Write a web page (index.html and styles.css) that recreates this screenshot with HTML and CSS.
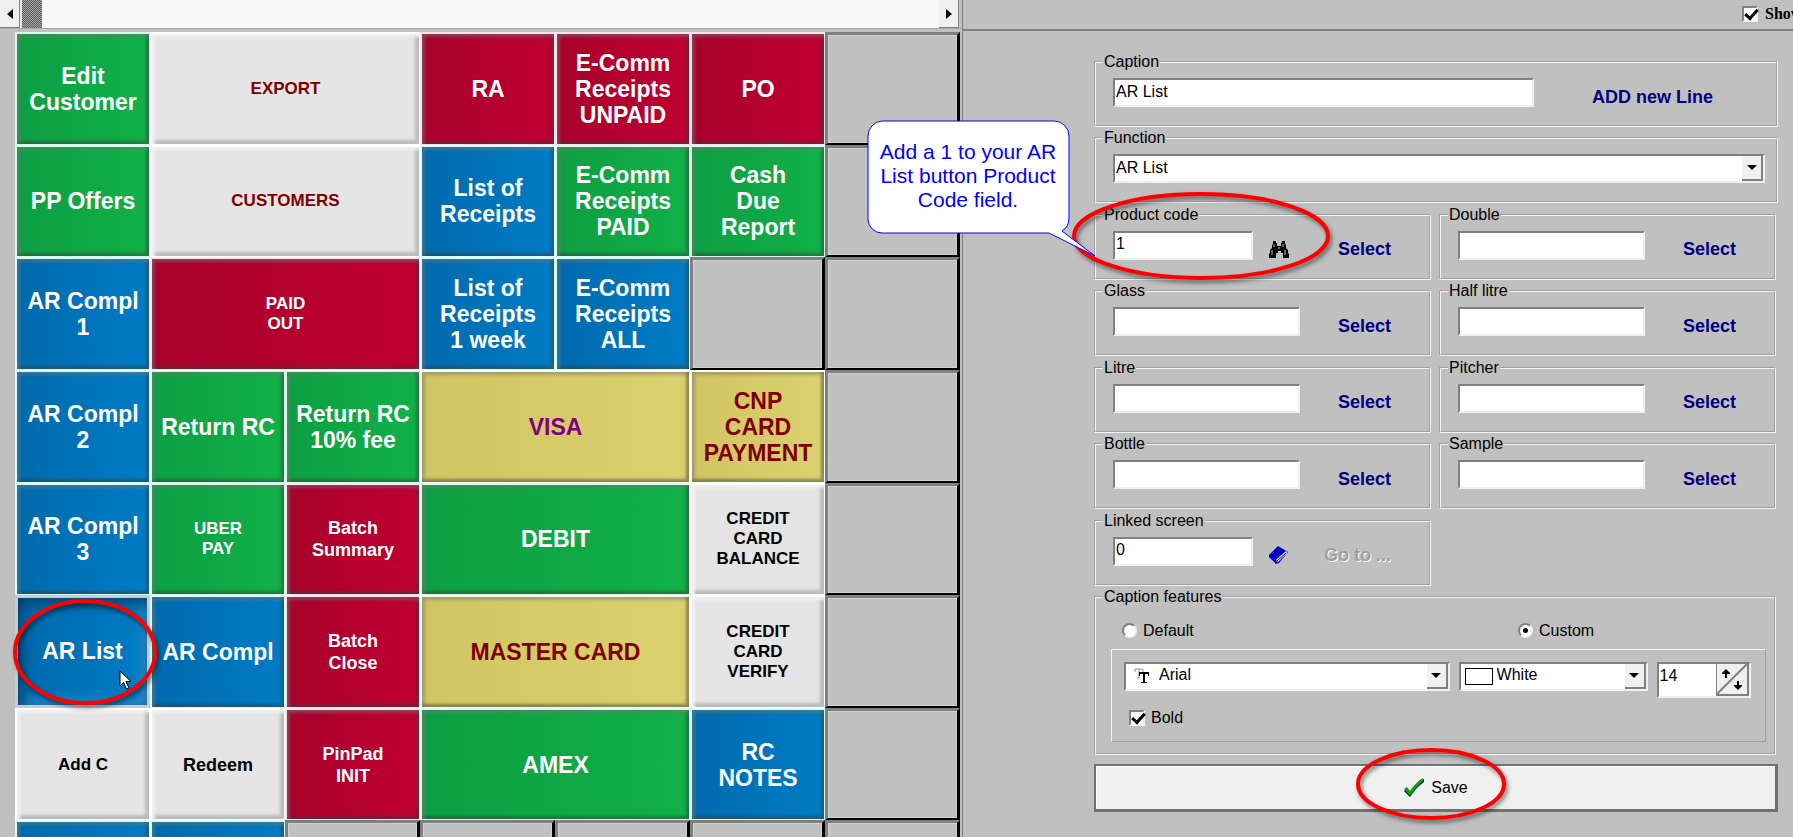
FILE: index.html
```html
<!DOCTYPE html>
<html lang="en">
<head>
<meta charset="utf-8">
<title>Screen editor</title>
<link rel="stylesheet" href="styles.css">
</head>
<body>
<main class="app">
  <section class="board" aria-label="Button layout">
    <div class="scrollbar">
      <button class="scroll-btn" aria-label="Scroll left"><svg width="6" height="10" viewBox="0 0 6 10"><path d="M6 0v10L0 5z"/></svg></button>
      <div class="scroll-thumb"></div>
      <div class="scroll-track"></div>
      <button class="scroll-btn" aria-label="Scroll right"><svg width="6" height="10" viewBox="0 0 6 10"><path d="M0 0v10l6-5z"/></svg></button>
    </div>
    <div class="tiles">
      <button class="tile green">Edit<br>Customer</button>
      <button class="tile gray wide small maroon">EXPORT</button>
      <button class="tile red">RA</button>
      <button class="tile red">E-Comm<br>Receipts<br>UNPAID</button>
      <button class="tile red">PO</button>
      <button class="tile empty" aria-label="Empty"></button>

      <button class="tile green">PP Offers</button>
      <button class="tile gray wide small maroon">CUSTOMERS</button>
      <button class="tile blue">List of<br>Receipts</button>
      <button class="tile green">E-Comm<br>Receipts<br>PAID</button>
      <button class="tile green">Cash<br>Due<br>Report</button>
      <button class="tile empty" aria-label="Empty"></button>

      <button class="tile blue">AR Compl<br>1</button>
      <button class="tile red wide small">PAID<br>OUT</button>
      <button class="tile blue">List of<br>Receipts<br>1 week</button>
      <button class="tile blue">E-Comm<br>Receipts<br>ALL</button>
      <button class="tile empty" aria-label="Empty"></button>
      <button class="tile empty" aria-label="Empty"></button>

      <button class="tile blue">AR Compl<br>2</button>
      <button class="tile green">Return RC</button>
      <button class="tile green">Return RC<br>10% fee</button>
      <button class="tile yellow wide purple">VISA</button>
      <button class="tile yellow maroon">CNP<br>CARD<br>PAYMENT</button>
      <button class="tile empty" aria-label="Empty"></button>

      <button class="tile blue">AR Compl<br>3</button>
      <button class="tile green small">UBER<br>PAY</button>
      <button class="tile red medium">Batch<br>Summary</button>
      <button class="tile green wide">DEBIT</button>
      <button class="tile gray small">CREDIT<br>CARD<br>BALANCE</button>
      <button class="tile empty" aria-label="Empty"></button>

      <div class="cell">
        <button class="tile blue pressed">AR List</button>
        <svg class="ring ring-tile" viewBox="0 0 144 106" preserveAspectRatio="none"><ellipse cx="72" cy="53" rx="70" ry="51"/></svg>
        <svg class="cursor" width="13" height="20" viewBox="0 0 13 20"><path d="M1 1v15l3.500-3.500 3 6.500 2.500-1-3-6.500h5z" fill="#fff" stroke="#000"/></svg>
      </div>
      <button class="tile blue">AR Compl</button>
      <button class="tile red medium">Batch<br>Close</button>
      <button class="tile yellow wide maroon">MASTER CARD</button>
      <button class="tile gray small">CREDIT<br>CARD<br>VERIFY</button>
      <button class="tile empty" aria-label="Empty"></button>

      <button class="tile gray small">Add C</button>
      <button class="tile gray medium">Redeem</button>
      <button class="tile red medium">PinPad<br>INIT</button>
      <button class="tile green wide">AMEX</button>
      <button class="tile blue">RC<br>NOTES</button>
      <button class="tile empty" aria-label="Empty"></button>

      <button class="tile blue" aria-label="Blue button"></button>
      <button class="tile blue" aria-label="Blue button"></button>
      <button class="tile empty" aria-label="Empty"></button>
      <button class="tile empty" aria-label="Empty"></button>
      <button class="tile empty" aria-label="Empty"></button>
      <button class="tile empty" aria-label="Empty"></button>
      <button class="tile empty" aria-label="Empty"></button>
    </div>
  </section>

  <section class="editor">
    <header class="topbar">
      <label class="show"><input type="checkbox" class="check" checked>Show</label>
    </header>
    <form class="form">
      <div class="groups">
        <fieldset class="group">
          <legend><label for="caption">Caption</label></legend>
          <div class="line line-caption">
            <input id="caption" class="field" type="text" value="AR List">
            <button type="button" class="link">ADD new Line</button>
          </div>
        </fieldset>

        <fieldset class="group">
          <legend><label for="function">Function</label></legend>
          <div class="line line-function">
            <div class="combo">
              <select id="function"><option>AR List</option></select>
              <span class="drop"><svg width="10" height="5" viewBox="0 0 10 5"><path d="M0 0h10L5 5z"/></svg></span>
            </div>
          </div>
        </fieldset>

        <div class="pair">
          <fieldset class="group product">
            <legend><label for="product">Product code</label></legend>
            <div class="line">
              <input id="product" class="field short" type="text" value="1">
              <button type="button" class="icon" aria-label="Find"><svg width="20" height="17" viewBox="0 0 20 17"><path d="M4 0h3v2h1v3h4V2h1V0h3v3l1 1v3l2 2v3l1 1v4h-6v-5h-2v-2H9v2H7v5H0v-4l1-1V9l2-2V4l1-1z"/><path d="M5 3v3M3 9v5M14 3v3M16 9v5M10 6v2" stroke="#c0c0c0"/></svg></button>
              <button type="button" class="link">Select</button>
            </div>
            <svg class="ring ring-product" viewBox="0 0 258 88" preserveAspectRatio="none"><ellipse cx="129" cy="44" rx="127" ry="42"/></svg>
            <div class="callout">
              <svg class="callout-shape" width="230" height="138" viewBox="0 0 230 138"><path d="M15 1H187A15 15 0 0 1 202 16V98Q202 107 195 111L228 136 182 113H15A14 14 0 0 1 1 99V16A15 15 0 0 1 15 1z" fill="#fff" stroke="#00f"/></svg>
              <p class="callout-text">Add a 1 to your AR<br>List button Product<br>Code field.</p>
            </div>
          </fieldset>
          <fieldset class="group">
            <legend><label for="double">Double</label></legend>
            <div class="line"><input id="double" class="field" type="text"><button type="button" class="link">Select</button></div>
          </fieldset>
        </div>

        <div class="pair">
          <fieldset class="group">
            <legend><label for="glass">Glass</label></legend>
            <div class="line"><input id="glass" class="field" type="text"><button type="button" class="link">Select</button></div>
          </fieldset>
          <fieldset class="group">
            <legend><label for="half">Half litre</label></legend>
            <div class="line"><input id="half" class="field" type="text"><button type="button" class="link">Select</button></div>
          </fieldset>
        </div>

        <div class="pair">
          <fieldset class="group">
            <legend><label for="litre">Litre</label></legend>
            <div class="line"><input id="litre" class="field" type="text"><button type="button" class="link">Select</button></div>
          </fieldset>
          <fieldset class="group">
            <legend><label for="pitcher">Pitcher</label></legend>
            <div class="line"><input id="pitcher" class="field" type="text"><button type="button" class="link">Select</button></div>
          </fieldset>
        </div>

        <div class="pair">
          <fieldset class="group">
            <legend><label for="bottle">Bottle</label></legend>
            <div class="line"><input id="bottle" class="field" type="text"><button type="button" class="link">Select</button></div>
          </fieldset>
          <fieldset class="group">
            <legend><label for="sample">Sample</label></legend>
            <div class="line"><input id="sample" class="field" type="text"><button type="button" class="link">Select</button></div>
          </fieldset>
        </div>

        <div class="pair">
          <fieldset class="group">
            <legend><label for="linked">Linked screen</label></legend>
            <div class="line">
              <input id="linked" class="field short" type="text" value="0">
              <button type="button" class="icon" aria-label="Pick screen"><svg width="20" height="18" viewBox="0 0 20 18"><path d="M0 9 9 0l10 6-9 11-3 1-7-7z" fill="#00c"/><path d="M7 14 17 5l1 2-9 9z" fill="#fff"/><path d="m8 15 9-8" stroke="#000"/><path d="m7 5 3 2-2 1" stroke="#006" fill="none"/></svg></button>
              <button type="button" class="link" disabled>Go to ...</button>
            </div>
          </fieldset>
        </div>

        <fieldset class="group features">
          <legend>Caption features</legend>
          <div class="modes">
            <label><input type="radio" name="mode" class="radio">Default</label>
            <label><input type="radio" name="mode" class="radio" checked>Custom</label>
          </div>
          <div class="panel">
            <div class="fonts">
              <div class="combo combo-font">
                <svg class="combo-icon" width="16" height="17" viewBox="0 0 16 17"><path d="M1 4V1h8v3M5 1v9M3 10h3" stroke="#909090" fill="none"/><path d="M5 8V4h10v4h-1V6h-3v8h2v1H7v-1h2V6H6v2z"/></svg>
                <select aria-label="Font"><option>Arial</option></select>
                <span class="drop"><svg width="10" height="5" viewBox="0 0 10 5"><path d="M0 0h10L5 5z"/></svg></span>
              </div>
              <div class="combo combo-color">
                <span class="swatch"></span>
                <select aria-label="Colour"><option>White</option></select>
                <span class="drop"><svg width="10" height="5" viewBox="0 0 10 5"><path d="M0 0h10L5 5z"/></svg></span>
              </div>
              <div class="spin">
                <input type="text" value="14" aria-label="Font size">
                <button type="button" class="spin-btn" aria-label="Change size"><svg width="30" height="30" viewBox="0 0 30 30"><path d="M0 30 30 0" stroke="#808080" stroke-width="2"/><path d="M9 5l4 4v1h-3v4H8v-4H5V9zM21 26l-4-4v-1h3v-4h2v4h3v1z"/></svg></button>
              </div>
            </div>
            <label class="bold"><input type="checkbox" class="check" checked>Bold</label>
          </div>
        </fieldset>
      </div>

      <button type="button" class="save">
        <svg width="22" height="20" viewBox="0 0 22 20"><path d="m1 13 3-2 3 3C10 9 15 4 21 1v3C15 8 11 13 7 19z" fill="#000080"/><path d="m1 11 3-2 3 4C10 8 15 3 20 0v3C15 7 11 12 7 18z" fill="#00a800"/></svg>
        Save
        <svg class="ring ring-save" viewBox="0 0 151 72" preserveAspectRatio="none"><ellipse cx="75" cy="36" rx="73" ry="34"/></svg>
      </button>
    </form>
  </section>
</main>
</body>
</html>
```
FILE: styles.css
```css
* { box-sizing: border-box; }

body {
  margin: 0;
  background: #c0c0c0;
  color: #000;
  font: 16px/18px "Liberation Sans", Arial, sans-serif;
}

button, input, select { font: inherit; color: inherit; }
button { padding: 0; border: 0; background: none; }

.app {
  display: grid;
  grid-template-columns: 962fr 831fr;
  height: 100vh;
  overflow: hidden;
}

/* ---------- button board ---------- */

.scrollbar {
  display: flex;
  height: 29px;
  padding-right: 3px;
  border-bottom: 1px solid #a8a8a8;
  background: #c0c0c0;
}

.scroll-btn {
  display: flex;
  align-items: center;
  justify-content: center;
  width: 20px;
  height: 28px;
  background: #f0f0f0;
  border-right: 1px solid #808080;
  border-bottom: 1px solid #808080;
}

.scroll-thumb {
  width: 22px;
  border: solid #e8e8e8;
  border-width: 0 1px 0 2px;
  border-right-color: #808080;
  background: repeating-conic-gradient(#606060 0 25%, #a0a0a0 0 50%) 0 0 / 2px 2px;
}

.scroll-track { flex: 1; background: #f8f8f8; }

.tiles {
  display: grid;
  grid-template-columns: repeat(7, 1fr);
  grid-template-rows: repeat(8, 1fr);
  height: 901px;
  margin: 3px 2px 0 15px;
}

.cell { position: relative; display: grid; z-index: 1; }

.tile {
  border: solid #fff;
  border-width: 2px 1px 1px 2px;
  color: #fff;
  font-size: 23px;
  font-weight: bold;
  line-height: 26px;
  min-width: 0;
  box-shadow:
    inset 3px 3px 3px rgba(120, 120, 120, .5),
    inset -3px -3px 3px rgba(60, 60, 60, .5);
}

.wide { grid-column: span 2; }
.small { font-size: 17px; line-height: 20px; }
.medium { font-size: 18px; line-height: 22px; }

.green { background: linear-gradient(90deg, #0d9e43, #10b148); border-color: #d4ffe8; }
.blue { background: linear-gradient(90deg, #006aad, #007cc5); border-color: #d4ffff; }
.red { background: linear-gradient(90deg, #a8002c, #bf0032); border-color: #ffe4ee; }
.yellow { background: linear-gradient(90deg, #d0c562, #dbd16e); border-color: #fffff0; }
.gray {
  background: #e5e5e5;
  color: #000;
  box-shadow: inset 3px 3px 3px #f0f0f0, inset -4px -4px 3px #bcbcbc;
}
.maroon { color: #800000; }
.purple { color: #800080; }

.pressed {
  border: 3px solid #c8ccd0;
  box-shadow: inset 4px 5px 14px #003c68, inset -3px -3px 14px #3c98d4;
}

.empty {
  background: #c0c0c0;
  border-color: #808080 #000 #000 #808080;
  border-width: 3px;
  border-bottom-width: 2px;
  box-shadow: inset 1px 1px #d0d0d0, inset -1px -1px #d0d0d0;
}

/* ---------- annotations ---------- */

.ring {
  position: absolute;
  overflow: visible;
  fill: none;
  stroke: #f00;
  stroke-width: 4px;
  filter: drop-shadow(2px 3px 2px rgba(0, 0, 0, .5));
  pointer-events: none;
}

.ring-tile { left: -2px; top: 4px; width: 144px; height: 106px; }
.ring-product { left: -24px; top: -32px; width: 258px; height: 88px; }
.ring-save { left: calc(50% - 80px); top: -18px; width: 151px; height: 72px; }
.cursor { position: absolute; left: 104px; top: 75px; }

.callout { position: absolute; left: -229px; top: -104px; width: 202px; }
.callout-shape { display: block; }
.callout-text {
  position: absolute;
  inset: 20px 0 auto;
  margin: 0;
  color: #00f;
  font-size: 21px;
  line-height: 24px;
  text-align: center;
  white-space: nowrap;
}

/* ---------- editor ---------- */

.editor { border-left: 1px solid #808080; }

.topbar {
  display: flex;
  justify-content: flex-end;
  height: 31px;
  padding-top: 5px;
  border-bottom: 2px solid #808080;
  overflow: hidden;
}

.show {
  display: flex;
  align-items: center;
  gap: 7px;
  width: 51px;
  height: 18px;
  white-space: nowrap;
  font: bold 16px/18px "Liberation Serif", "Times New Roman", serif;
}

.form {
  display: flex;
  flex-direction: column;
  gap: 9px;
  padding: 22px 15px 0 131px;
}

.groups {
  display: flex;
  flex-direction: column;
  justify-content: space-between;
  min-height: 702px;
}

.group {
  position: relative;
  min-width: 0;
  min-height: 74px;
  margin: 0;
  padding: 7px 0 0 17px;
  border: 2px groove #f4f4f4;
}

.group legend { margin-left: -10px; padding: 0 1px; line-height: 18px; }

.pair {
  display: grid;
  grid-template-columns: 1fr 1fr;
  gap: 8px;
  margin-right: 2px;
}

.product { z-index: 2; }

.line {
  display: flex;
  gap: 16px;
  padding-right: 38px;
}

.line-caption { padding-right: 63px; gap: 58px; }
.line-function { padding-right: 11px; }

.field {
  flex: 1;
  min-width: 0;
  max-width: 422px;
  height: 29px;
  padding: 0 1px 2px;
  border: 2px solid;
  border-color: #808080 #f0f0f0 #f0f0f0 #808080;
  background: #fff;
  outline: 0;
}

.pair .field { max-width: 187px; }
.pair .field.short { max-width: 140px; }

.link {
  margin-left: auto;
  padding-top: 8px;
  color: #000080;
  font-size: 18px;
  font-weight: bold;
  line-height: 20px;
  white-space: nowrap;
}

.link:disabled { color: #a0a0a0; text-shadow: 1px 1px #fff; }
.icon { display: flex; align-items: flex-end; height: 27px; }

.combo {
  display: flex;
  flex: 1;
  align-items: center;
  height: 29px;
  border: 2px solid;
  border-color: #808080 #f0f0f0 #f0f0f0 #808080;
  background: #fff;
}

.combo select {
  appearance: none;
  flex: 1;
  min-width: 0;
  padding: 0 1px 2px;
  border: 0;
  background: none;
  outline: 0;
}

.drop {
  display: flex;
  align-items: center;
  justify-content: center;
  align-self: stretch;
  width: 21px;
  background: #f0f0f0;
  border: solid #808080;
  border-width: 0 2px 2px 0;
  pointer-events: none;
}

.check, .radio {
  appearance: none;
  flex: none;
  width: 16px;
  height: 16px;
  margin: 0;
  border: 2px solid;
  border-color: #808080 #f0f0f0 #f0f0f0 #808080;
  background: #fff;
}

.check:checked::after {
  content: "";
  display: block;
  width: 10px;
  height: 5px;
  margin: 1px;
  border: solid #000;
  border-width: 0 0 3px 3px;
  transform: rotate(-48deg);
}

.radio { width: 15px; height: 15px; border-radius: 50%; }
.radio:checked::after {
  content: "";
  display: block;
  width: 5px;
  height: 5px;
  margin: 3px;
  border-radius: 50%;
  background: #000;
}

.features { min-height: 167px; margin-right: 2px; padding: 0 8px 11px 15px; }
.features legend { margin-left: -8px; }
.modes { display: grid; grid-template-columns: 407fr 248fr; padding: 16px 0 9px; }
.modes label { display: flex; align-items: center; gap: 6px; height: 18px; }
.modes label { padding-left: 11px; }
.modes label + label { padding-left: 0; }

.panel {
  height: 93px;
  padding: 12px 14px 0 12px;
  border: 1px solid;
  border-color: #f4f4f4 #a0a0a0 #a0a0a0 #f4f4f4;
}

.fonts { display: flex; align-items: flex-start; gap: 9px; }
.combo-font { flex: 327; }
.combo-color { flex: 188; }
.combo-icon { margin: 0 8px; }
.swatch { width: 28px; height: 17px; margin: 0 3px 0 4px; border: 1px solid #000; }

.spin {
  display: flex;
  flex: 92;
  height: 36px;
  border: 2px solid;
  border-color: #808080 #f0f0f0 #f0f0f0 #808080;
  background: #fff;
}

.spin input { flex: 1; width: 20px; height: 24px; padding: 0 1px; border: 0; background: none; outline: 0; }
.spin-btn {
  flex: none;
  width: 33px;
  height: 32px;
  background: #f0f0f0;
  border: solid #808080;
  border-width: 0 2px 2px 1px;
}
.spin-btn svg { display: block; }

.bold { display: flex; align-items: center; gap: 6px; width: 80px; margin: 11px 0 0 5px; }

.save {
  position: relative;
  display: flex;
  align-items: center;
  justify-content: center;
  gap: 6px;
  height: 48px;
  background: #f0f0f0;
  border: 2px solid #707070;
  border-width: 2px 3px 3px 2px;
  box-shadow: inset 1px 1px #fff;
}
```
